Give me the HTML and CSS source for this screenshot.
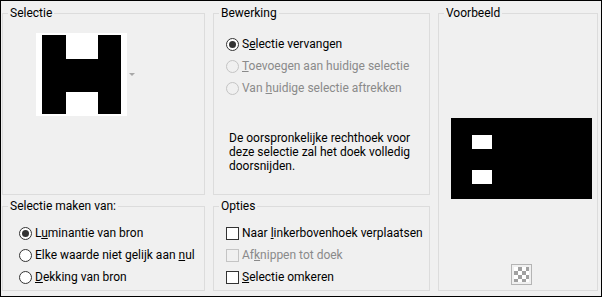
FILE: index.html
```html
<!DOCTYPE html>
<html lang="nl">
<head>
  <meta charset="UTF-8" />
  <title>Selectie uit masker</title>
  <link rel="stylesheet" href="styles.css">
</head>
<body>
  <div class="dialog">
    <fieldset class="group group-source">
      <legend>Selectie</legend>
      <div class="source-body">
        <div class="thumb">
          <svg width="79" height="79" viewBox="0 0 79 79">
            <rect x="0" y="0" width="79" height="79" fill="#000"/>
            <rect x="24" y="0" width="32" height="24" fill="#fff"/>
            <rect x="24" y="57" width="32" height="22" fill="#fff"/>
          </svg>
        </div>
        <span class="drop-arrow"></span>
      </div>
    </fieldset>

    <fieldset class="group group-edit">
      <legend>Bewerking</legend>
      <div class="list list-edit">
        <label class="option"><span class="radio checked"></span><span>S<u>e</u>lectie vervangen</span></label>
        <label class="option disabled"><span class="radio"></span><span><u>T</u>oevoegen aan huidige selectie</span></label>
        <label class="option disabled"><span class="radio"></span><span>Van <u>h</u>uidige selectie aftrekken</span></label>
      </div>
      <p class="note">De oorspronkelijke rechthoek voor deze selectie zal het doek volledig doorsnijden.</p>
    </fieldset>

    <fieldset class="group group-preview">
      <legend>Voorbeeld</legend>
      <div class="preview-body">
        <div class="preview">
          <span class="hole hole-top"></span>
          <span class="hole hole-bottom"></span>
        </div>
        <div class="checker"><span></span></div>
      </div>
    </fieldset>

    <fieldset class="group group-make">
      <legend>Selectie maken van:</legend>
      <div class="list list-make">
        <label class="option"><span class="radio checked"></span><span>L<u>u</u>minantie van bron</span></label>
        <label class="option"><span class="radio"></span><span>Elke waarde niet gelijk aan <u>n</u>ul</span></label>
        <label class="option"><span class="radio"></span><span><u>D</u>ekking van bron</span></label>
      </div>
    </fieldset>

    <fieldset class="group group-options">
      <legend>Opties</legend>
      <div class="list list-options">
        <label class="option"><span class="check"></span><span>Naar <u>l</u>inkerbovenhoek verplaatsen</span></label>
        <label class="option disabled"><span class="check"></span><span>Af<u>k</u>nippen tot doek</span></label>
        <label class="option"><span class="check"></span><span><u>S</u>electie omkeren</span></label>
      </div>
    </fieldset>
  </div>
</body>
</html>
```

FILE: styles.css
```css
:root {
  --face: #f0f0f0;
  --line: #dcdcdc;
  --ink: #000;
  --muted: #8a8a8a;
  --ctl: #333;
}

* {
  box-sizing: border-box;
}

html, body {
  margin: 0;
  padding: 0;
}

body {
  width: 602px;
  height: 297px;
  background: var(--face);
  border: 1px solid #000;
  font-family: Roboto, 'Noto Sans', sans-serif;
  font-size: 12px;
  color: var(--ink);
  overflow: hidden;
}

.dialog {
  display: grid;
  grid-template-columns: 203px 217px 160px;
  grid-template-rows: 190px 93px;
  column-gap: 8px;
  row-gap: 3px;
  padding: 4px 0 0 1px;
}

.group {
  margin: 0;
  padding: 0;
  min-width: 0;
  border: 1px solid var(--line);
}

.group legend {
  margin-left: 5px;
  padding: 0 2px;
  line-height: 16px;
}

.group-preview {
  grid-column: 3;
  grid-row: 1 / span 2;
}

/* Selectie */
.source-body {
  display: flex;
  align-items: center;
  padding: 12px 0 0 33px;
}

.thumb {
  width: 91px;
  height: 83px;
  background: #fff;
  padding: 2px 6px;
}

.thumb svg {
  display: block;
}

.drop-arrow {
  width: 0;
  height: 0;
  margin-left: 2px;
  border-left: 3px solid transparent;
  border-right: 3px solid transparent;
  border-top: 3px solid #a8a8a8;
}

/* lists with radio / check */
.list {
  display: flex;
  flex-direction: column;
}

.list-edit {
  padding: 12px 0 0 12px;
}

.list-make {
  padding: 8px 0 0 16px;
}

.list-options {
  padding: 8px 0 0 12px;
}

.option {
  display: flex;
  align-items: center;
  height: 22px;
  white-space: nowrap;
}

.option.disabled {
  color: var(--muted);
}

.radio {
  width: 13px;
  height: 13px;
  border: 1px solid var(--ctl);
  border-radius: 50%;
  background: #fff;
  margin-right: 3px;
  display: flex;
  align-items: center;
  justify-content: center;
  flex: none;
}

.radio.checked::after {
  content: "";
  width: 7px;
  height: 7px;
  border-radius: 50%;
  background: var(--ctl);
}

.disabled .radio,
.disabled .check {
  border-color: #c4c4c4;
  background: var(--face);
}

.check {
  width: 13px;
  height: 13px;
  border: 1px solid var(--ctl);
  background: #fff;
  margin-right: 3px;
  flex: none;
}

.note {
  margin: 32px 0 0 15px;
  line-height: 14px;
  width: 195px;
}

/* Voorbeeld */
.preview-body {
  display: flex;
  flex-direction: column;
  padding: 97px 0 0 12px;
}

.preview {
  position: relative;
  width: 141px;
  height: 81px;
  background: #000;
}

.hole {
  position: absolute;
  left: 21px;
  width: 20px;
  height: 14px;
  background: #fff;
}

.hole-top {
  top: 17px;
}

.hole-bottom {
  top: 52px;
}

.checker {
  width: 21px;
  height: 21px;
  margin: 65px 0 0 60px;
  border: 1px solid #b4b4b4;
  padding: 2px;
  background: #f0f0f0;
}

.checker span {
  display: block;
  width: 15px;
  height: 15px;
  background-color: #fff;
  background-image:
    linear-gradient(45deg, #a0a0a0 25%, transparent 25%, transparent 75%, #a0a0a0 75%),
    linear-gradient(45deg, #a0a0a0 25%, transparent 25%, transparent 75%, #a0a0a0 75%);
  background-size: 8px 8px;
  background-position: 0 0, 4px 4px;
}
```
